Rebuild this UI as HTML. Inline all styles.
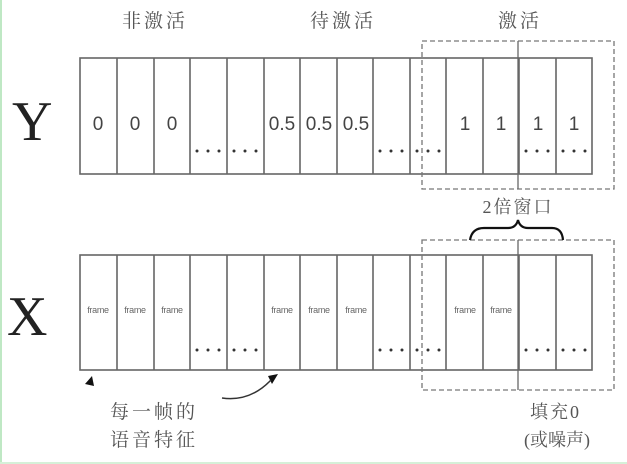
<!DOCTYPE html>
<html><head><meta charset="utf-8"><style>
body{margin:0;width:627px;height:464px;background:#fff;overflow:hidden;position:relative;font-family:"Liberation Sans",sans-serif}
.l{position:absolute;left:0;top:0;width:2px;height:464px;background:#bfe8c4}
.b{position:absolute;left:0;bottom:0;width:627px;height:2px;background:#d6f0d8}
</style></head><body>
<div class="l"></div><div class="b"></div>
<svg width="627" height="464" style="position:absolute;left:0;top:0">
<defs>
<g id="d"><circle cx="7" cy="0" r="1.5"/><circle cx="18" cy="0" r="1.5"/><circle cx="29" cy="0" r="1.5"/></g>
</defs>
<g font-family="'Liberation Serif','Noto Serif CJK SC',serif" fill="#555" font-size="19">
<text x="155" y="27" text-anchor="middle" letter-spacing="3">非激活</text>
<text x="343" y="27" text-anchor="middle" letter-spacing="3">待激活</text>
<text x="520" y="27" text-anchor="middle" letter-spacing="3">激活</text>
<text x="518" y="213" text-anchor="middle" font-size="18" letter-spacing="2">2倍窗口</text>
<text x="110" y="418" font-size="19" letter-spacing="3">每一帧的</text>
<text x="110" y="446" font-size="19" letter-spacing="3">语音特征</text>
<text x="530" y="418" font-size="18" letter-spacing="2">填充0</text>
<text x="524" y="446" font-size="18">(或噪声)</text>
</g>
<text x="12" y="140" font-family="'Liberation Serif',serif" font-size="56" fill="#222">Y</text>
<text x="7" y="335" font-family="'Liberation Serif',serif" font-size="56" fill="#222">X</text>
<g stroke="#666" stroke-width="1.6" fill="none">
<rect x="80" y="58" width="512" height="116"/>
<rect x="80" y="255" width="512" height="115"/>
<path d="M117 58V174M154 58V174M190 58V174M227 58V174M264 58V174M300 58V174M337 58V174M373 58V174M410 58V174M446 58V174M483 58V174M519 58V174M556 58V174
M117 255V370M154 255V370M190 255V370M227 255V370M264 255V370M300 255V370M337 255V370M373 255V370M410 255V370M446 255V370M483 255V370M519 255V370M556 255V370"/>
</g>
<g stroke="#777" stroke-width="1.3" fill="none" stroke-dasharray="5,3">
<rect x="422" y="41" width="192" height="148"/>
<rect x="422" y="240" width="192" height="150"/>
</g>
<path d="M518 41V189M518 240V390" stroke="#666" stroke-width="1.3"/>
<g font-size="19" fill="#444" text-anchor="middle">
<text x="98" y="130">0</text><text x="135" y="130">0</text><text x="172" y="130">0</text>
<text x="282" y="130">0.5</text><text x="319" y="130">0.5</text><text x="356" y="130">0.5</text>
<text x="465" y="130">1</text><text x="501" y="130">1</text><text x="538" y="130">1</text><text x="574" y="130">1</text>
</g>
<g font-size="9" fill="#666" text-anchor="middle" letter-spacing="-0.3">
<text x="98" y="313">frame</text><text x="135" y="313">frame</text><text x="172" y="313">frame</text>
<text x="282" y="313">frame</text><text x="319" y="313">frame</text><text x="356" y="313">frame</text>
<text x="465" y="313">frame</text><text x="501" y="313">frame</text>
</g>
<g fill="#333">
<use href="#d" x="190" y="151"/><use href="#d" x="227" y="151"/>
<use href="#d" x="373" y="151"/><use href="#d" x="410" y="151"/>
<use href="#d" x="519" y="151"/><use href="#d" x="556" y="151"/>
<use href="#d" x="190" y="350"/><use href="#d" x="227" y="350"/>
<use href="#d" x="373" y="350"/><use href="#d" x="410" y="350"/>
<use href="#d" x="519" y="350"/><use href="#d" x="556" y="350"/>
</g>
<path d="M470 240 Q472 228 484 228 L508 228 Q516 228 518 220 Q520 228 528 228 L552 228 Q562 228 563 240" stroke="#111" stroke-width="2.2" fill="none"/>
<path d="M85 384 L92 376 L94 386Z M272 384 L268 376 L278 374Z" fill="#111"/>
<path d="M222 398 Q250 402 271 380" stroke="#333" stroke-width="1.5" fill="none"/>
</svg>
</body></html>
